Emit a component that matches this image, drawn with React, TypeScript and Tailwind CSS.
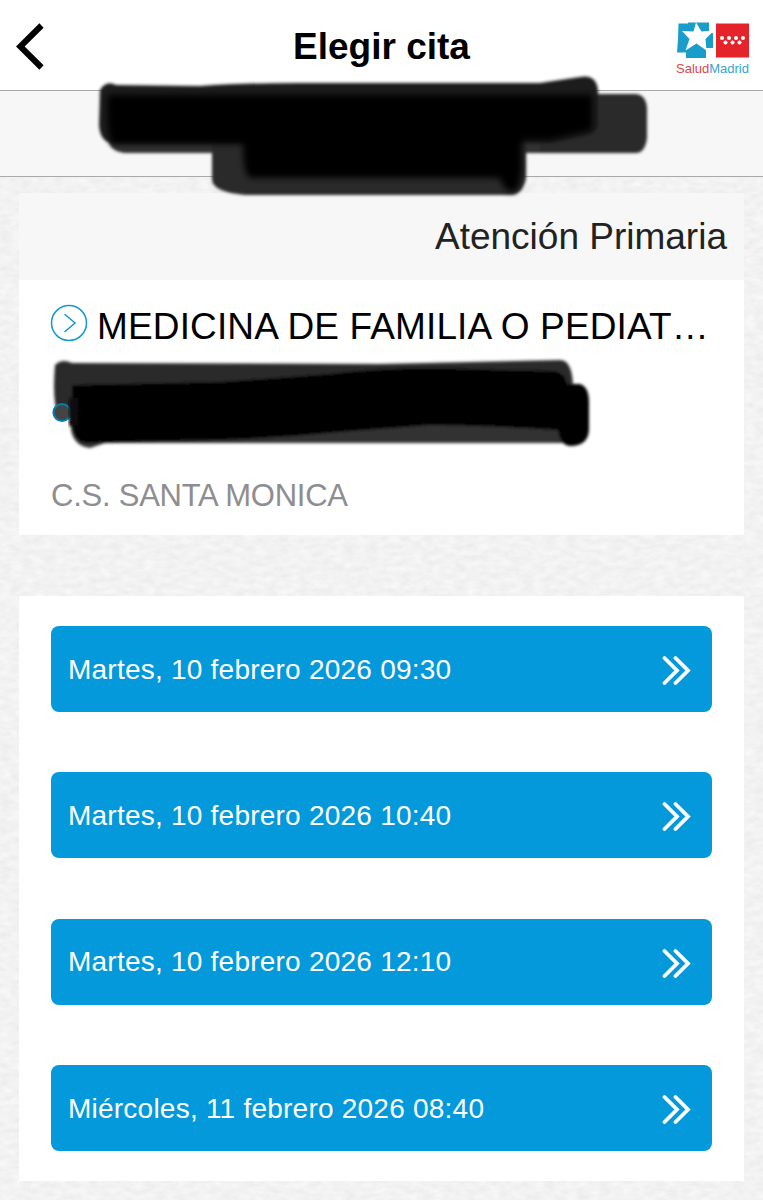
const appointments = [
  'Martes, 10 febrero 2026 09:30',
  'Martes, 10 febrero 2026 10:40',
  'Martes, 10 febrero 2026 12:10',
  'Miércoles, 11 febrero 2026 08:40',
];

function PaperTexture() {
  return (
    <svg className="absolute inset-0 h-full w-full" aria-hidden="true">
      <filter id="paper" x="0" y="0" width="100%" height="100%" colorInterpolationFilters="sRGB">
        <feTurbulence type="fractalNoise" baseFrequency="0.09 0.18" numOctaves="3" seed="4" />
        <feColorMatrix
          values="0.07 0 0 0 0.914
                  0.07 0 0 0 0.914
                  0.07 0 0 0 0.914
                  0 0 0 0 1"
        />
      </filter>
      <rect width="100%" height="100%" filter="url(#paper)" />
    </svg>
  );
}

function SaludMadridLogo() {
  return (
    <div className="w-[76px] pt-[22px]">
      <svg width="76" height="37" viewBox="0 0 76 37" className="block">
        <path d="M2.500 1.500H12V0.500H33V11H37V26H30V36H10V30.500H1L2 17Z" fill="#1b9dcc" />
        <path d="M20 0.500L25.500 9.500L38 8.500L29.500 17L30.500 28.500L20.500 21.500L9.500 28.500L13.500 17L6 9L17.500 9.500Z" fill="#fff" />
        <rect x="40" y="1.500" width="33" height="34" fill="#e5232b" />
        <g fill="#fff">
          <circle cx="46" cy="16" r="2" />
          <circle cx="53" cy="16" r="2" />
          <circle cx="60" cy="16" r="2" />
          <circle cx="67" cy="16" r="2" />
          <circle cx="49.500" cy="20.500" r="2" />
          <circle cx="56.500" cy="20.500" r="2" />
          <circle cx="63.500" cy="20.500" r="2" />
        </g>
      </svg>
      <p className="mt-px text-[13px] leading-[17px] whitespace-nowrap text-[#e0454c]">
        Salud<span className="text-[#35a5cf]">Madrid</span>
      </p>
    </div>
  );
}

// Marker strokes covering the patient name
function NameMask() {
  return (
    <svg className="absolute top-[-19px] left-[90px] z-10" width="570" height="130" viewBox="90 72 570 130">
      <filter id="markerA" x="-5%" y="-10%" width="110%" height="120%">
        <feGaussianBlur stdDeviation="1.500" />
      </filter>
      <filter id="markerCore" x="-5%" y="-10%" width="110%" height="120%">
        <feGaussianBlur stdDeviation="3" />
      </filter>
      <g filter="url(#markerA)">
        <path d="M480 94H636Q646 95 647 108V138Q645 153 636 153H480Z" fill="#2b2b2b" />
        <path d="M109 125H540V153H124Q110 151 108 140Z" fill="#333" />
        <path d="M212 135H526V178Q523 195 510 195L245 195Q213 192 212 180Z" fill="#292929" />
        <path d="M100 90Q106 80 116 85L200 86Q240 83 300 83H540L580 77Q596 74 598 90V125Q598 134 580 137L550 143H110Q100 140 99 125Z" fill="#1e1e1e" />
      </g>
      <path d="M108 95H592V130L550 140H522V168Q520 192 512 192Q503 190 500 178H250Q243 174 243 144H112Q106 130 108 95Z" fill="#020202" filter="url(#markerCore)" />
    </svg>
  );
}

function DoctorMask() {
  return (
    <svg className="block" width="550" height="96" viewBox="45 356 550 96">
      <filter id="markerB" x="-5%" y="-10%" width="110%" height="120%">
        <feGaussianBlur stdDeviation="1.600" />
      </filter>
      <g filter="url(#markerB)">
        <path d="M55 365Q62 358 72 363L380 364L560 360Q572 360 573 385V415H58Q52 400 55 365Z" fill="#2b2b2b" />
        <path d="M71 400H570V443H105L90 448Q74 446 71 430Z" fill="#333" />
        <path d="M72 385L220 382L330 374Q400 365 500 370L555 371Q566 374 567 384H580Q589 387 589 402V430Q588 446 570 446Q560 445 558 430Q480 425 430 425L340 432Q250 441 160 441L86 443Q74 442 72 425Z" fill="#020202" />
      </g>
      <circle cx="62" cy="412.500" r="8.500" fill="#444" stroke="#087cab" strokeWidth="2.200" />
      <rect x="69" y="398" width="9" height="28" fill="#090909" filter="url(#markerB)" />
    </svg>
  );
}

function CircleArrow() {
  return (
    <svg width="38" height="38" viewBox="0 0 38 38" fill="none" stroke="#1398d3" strokeWidth="1.500" className="shrink-0">
      <circle cx="19" cy="19" r="17.500" />
      <path d="M15 10.500L25 19L15 27.500" strokeLinecap="round" />
    </svg>
  );
}

function DoubleChevron() {
  return (
    <svg
      width="30"
      height="32"
      viewBox="0 0 30 32"
      fill="none"
      stroke="#fff"
      strokeWidth="3.800"
      strokeLinecap="round"
      strokeLinejoin="miter"
    >
      <path d="M3.500 5L16 17.500L3.500 30M14.500 5L27 17.500L14.500 30" />
    </svg>
  );
}

export default function App() {
  return (
    <div className="relative h-[1200px] w-[763px] overflow-hidden bg-[#f2f2f2] font-['Liberation_Sans',Arial,sans-serif]">
      <PaperTexture />
      <div className="relative flex flex-col">
        <header className="grid h-[91px] grid-cols-[1fr_auto_1fr] border-b border-[#a9a9a9] bg-white">
          <button className="flex items-start pt-[23px] pl-4" aria-label="Volver">
            <svg width="28" height="47" viewBox="0 0 28 47" fill="none" stroke="#000" strokeWidth="6">
              <path d="M25.500 2.500L4.300 23.500L25.500 44.500" />
            </svg>
          </button>
          <h1 className="pt-[25px] text-[37px] leading-[44px] font-bold">Elegir cita</h1>
          <div className="flex justify-end pr-[11px]">
            <SaludMadridLogo />
          </div>
        </header>

        <section className="relative h-[86px] border-b border-[#a9a9a9] bg-[#f7f7f7]">
          <NameMask />
        </section>

        <main className="flex flex-col gap-[61px] pt-4 pr-[19px] pl-[19px]">
          <section className="h-[342px] bg-white">
            <h2 className="h-[87px] bg-[#f7f7f7] pt-[21px] pr-[17px] text-right text-[37px] leading-[46px] text-[#222]">
              Atención Primaria
            </h2>
            <div className="flex gap-[9px] pt-6 pl-[31px]">
              <CircleArrow />
              <p className="text-[37px] leading-[46px] tracking-[0.14px] whitespace-nowrap text-black">
                MEDICINA DE FAMILIA O PEDIAT…
              </p>
            </div>
            <div className="pt-[6px] pl-[26px]">
              <DoctorMask />
            </div>
            <p className="pt-[26px] pl-8 text-[31px] leading-[36px] tracking-[-0.24px] text-[#8e8e90]">
              C.S. SANTA MONICA
            </p>
          </section>

          <section className="flex h-[585px] flex-col gap-[60.400px] bg-white px-8 pt-[30px]">
            {appointments.map((label) => (
              <button
                key={label}
                className="flex h-[86px] shrink-0 items-center justify-between rounded-lg bg-[#0399da] pr-[21px] pl-[17px] text-[28px] tracking-[0.23px] text-white"
              >
                <span className="pt-px whitespace-nowrap">{label}</span>
                <DoubleChevron />
              </button>
            ))}
          </section>
        </main>
      </div>
    </div>
  );
}
